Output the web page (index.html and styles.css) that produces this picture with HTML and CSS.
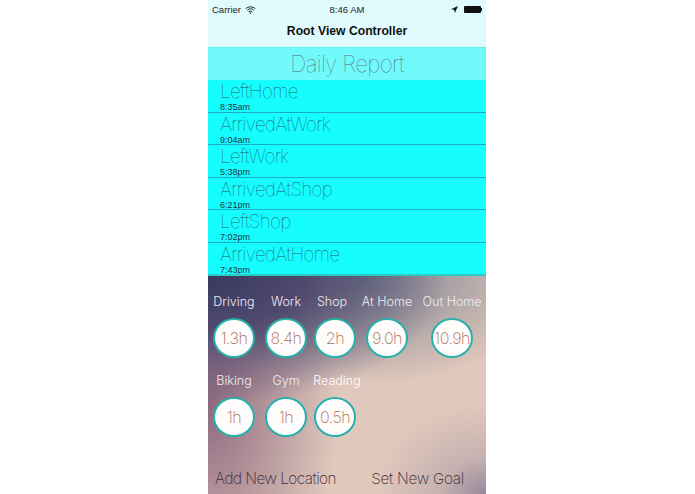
FILE: index.html
```html
<!DOCTYPE html>
<html lang="en">
<head>
<meta charset="utf-8">
<title>Root View Controller</title>
<link rel="stylesheet" href="styles.css">
</head>
<body>
<main class="phone">
  <header class="topbar">
    <div class="status">
      <div class="status-left">
        <span>Carrier</span>
        <svg class="wifi" viewBox="0 0 12 9" width="11" height="8"><path d="M.6 3A8 8 0 0 1 11.4 3M2.3 4.8a5.4 5.4 0 0 1 7.4 0M4 6.5a3 3 0 0 1 4 0" fill="none" stroke="#222" stroke-width="1.1"/><path d="M6 9 4.8 7.6a2 2 0 0 1 2.4 0z" fill="#222"/></svg>
      </div>
      <span class="clock">8:46 AM</span>
      <div class="status-right">
        <svg class="loc" viewBox="0 0 8 8" width="7" height="7"><path d="M8 0 0 3.6l3.6.8L4.4 8z" fill="#111"/></svg>
        <span class="battery"></span><span class="nub"></span>
      </div>
    </div>
    <h1 class="nav-title">Root View Controller</h1>
  </header>
  <h2 class="report-title">Daily Report</h2>
  <ul class="events">
    <li class="event"><span class="event-name">LeftHome</span><span class="event-time">8:35am</span></li>
    <li class="event"><span class="event-name">ArrivedAtWork</span><span class="event-time">9:04am</span></li>
    <li class="event"><span class="event-name">LeftWork</span><span class="event-time">5:38pm</span></li>
    <li class="event"><span class="event-name">ArrivedAtShop</span><span class="event-time">6:21pm</span></li>
    <li class="event"><span class="event-name">LeftShop</span><span class="event-time">7:02pm</span></li>
    <li class="event"><span class="event-name">ArrivedAtHome</span><span class="event-time">7:43pm</span></li>
  </ul>
  <section class="stats">
    <div class="stat-row">
      <div class="stat"><span class="stat-label">Driving</span><span class="ring">1.3h</span></div>
      <div class="stat gap-a"><span class="stat-label">Work</span><span class="ring">8.4h</span></div>
      <div class="stat gap-b"><span class="stat-label shift-l">Shop</span><span class="ring">2h</span></div>
      <div class="stat gap-a"><span class="stat-label">At Home</span><span class="ring">9.0h</span></div>
      <div class="stat gap-c"><span class="stat-label">Out Home</span><span class="ring">10.9h</span></div>
    </div>
    <div class="stat-row second">
      <div class="stat"><span class="stat-label">Biking</span><span class="ring">1h</span></div>
      <div class="stat gap-a"><span class="stat-label">Gym</span><span class="ring">1h</span></div>
      <div class="stat gap-b"><span class="stat-label shift-r">Reading</span><span class="ring">0.5h</span></div>
    </div>
    <div class="actions">
      <span>Add New Location</span>
      <span class="goal">Set New Goal</span>
    </div>
  </section>
</main>
</body>
</html>
```
FILE: styles.css
```css
* { box-sizing: border-box; }
html, body { margin: 0; padding: 0; background: #fff; }
body { width: 695px; height: 494px; overflow: hidden; font-family: "Liberation Sans", Arial, sans-serif; }
.phone { width: 278px; height: 494px; margin-left: 208px; display: flex; flex-direction: column; }
.topbar { height: 47px; background: #e0fbfd; flex: none; }
.status { height: 20px; display: flex; align-items: center; justify-content: space-between; padding: 0 4px 1px 4px; font-size: 9.5px; color: #222; position: relative; }
.status-left { display: flex; align-items: center; gap: 4px; }
.clock { position: absolute; left: 0; right: 0; text-align: center; }
.status-right { display: flex; align-items: center; }
.loc { margin-right: 6px; }
.battery { width: 17px; height: 7px; background: #111; border-radius: 1px; }
.nub { width: 1px; height: 3px; background: #111; }
.nav-title { margin: 0; height: 27px; line-height: 22px; text-align: center; font-size: 12.2px; font-weight: 700; color: #111; }
.report-title { margin: 0; height: 33px; flex: none; background: #70fafb; border-top: 1px solid #5eeef0; text-align: center; font: 100 22.5px/32px Inter, Roboto, sans-serif; letter-spacing: -.7px; color: #667; }
.events { margin: 0; padding: 0; list-style: none; height: 196px; flex: none; background: #15fdff; display: flex; flex-direction: column; }
.event { flex: 1 1 0; min-height: 0; padding: 2px 0 0 12px; display: flex; flex-direction: column; border-bottom: 1px solid #1fa9c4; overflow: hidden; }
.event:last-child { border-bottom: 2px solid #2fc9c4; }
.event-name { flex: none; font: 100 18.7px/20px Inter, Roboto, sans-serif; letter-spacing: -.6px; color: #256; height: 21px; }
.event-time { flex: none; font-size: 9px; line-height: 9px; color: #234; }
.stats { flex: 1; min-height: 0; padding: 18px 0 0 5px; display: flex; flex-direction: column;
  background:
    radial-gradient(ellipse 110px 90px at 100% 100%, rgba(135,125,150,.85), rgba(150,135,155,.35) 40%, rgba(135,125,150,0) 100%),
    radial-gradient(ellipse 240px 130px at 0% 0%, #39385f 0%, rgba(70,65,105,.9) 40%, rgba(110,90,120,0) 100%),
    radial-gradient(ellipse 190px 110px at 55% 0%, rgba(105,115,135,.85), rgba(105,115,135,0)),
    radial-gradient(ellipse 130px 210px at 0% 60%, #8f6a80 0%, rgba(143,106,128,0) 100%),
    #e0c8bc; }
.stat-row { display: flex; }
.stat-row.second { margin-top: 15px; }
.stat { width: 42px; display: flex; flex-direction: column; align-items: center; flex: none; }
.gap-a { margin-left: 10px; }
.gap-b { margin-left: 7px; }
.gap-c { margin-left: 23px; }
.stat-label { font: 300 12.5px/16px Inter, Roboto, sans-serif; color: #f0ecf0; white-space: nowrap; }
.stat-label.shift-l { position: relative; left: -3px; }
.stat-label.shift-r { position: relative; left: 2px; color: #fff; }
.ring { margin-top: 8px; width: 42px; height: 40px; border-radius: 50%; border: 2px solid #26b0ac; background: #fffdfb; display: flex; align-items: center; justify-content: center; font: 200 16px/1 Inter, Roboto, sans-serif; letter-spacing: -.5px; color: #a8705c; white-space: nowrap; }
.actions { margin-top: auto; padding: 0 22px 6px 2px; display: flex; justify-content: space-between; font: 200 15.3px/18px Inter, Roboto, sans-serif; letter-spacing: -.5px; color: #3a2a34; }
.goal { letter-spacing: -.25px; }
```
